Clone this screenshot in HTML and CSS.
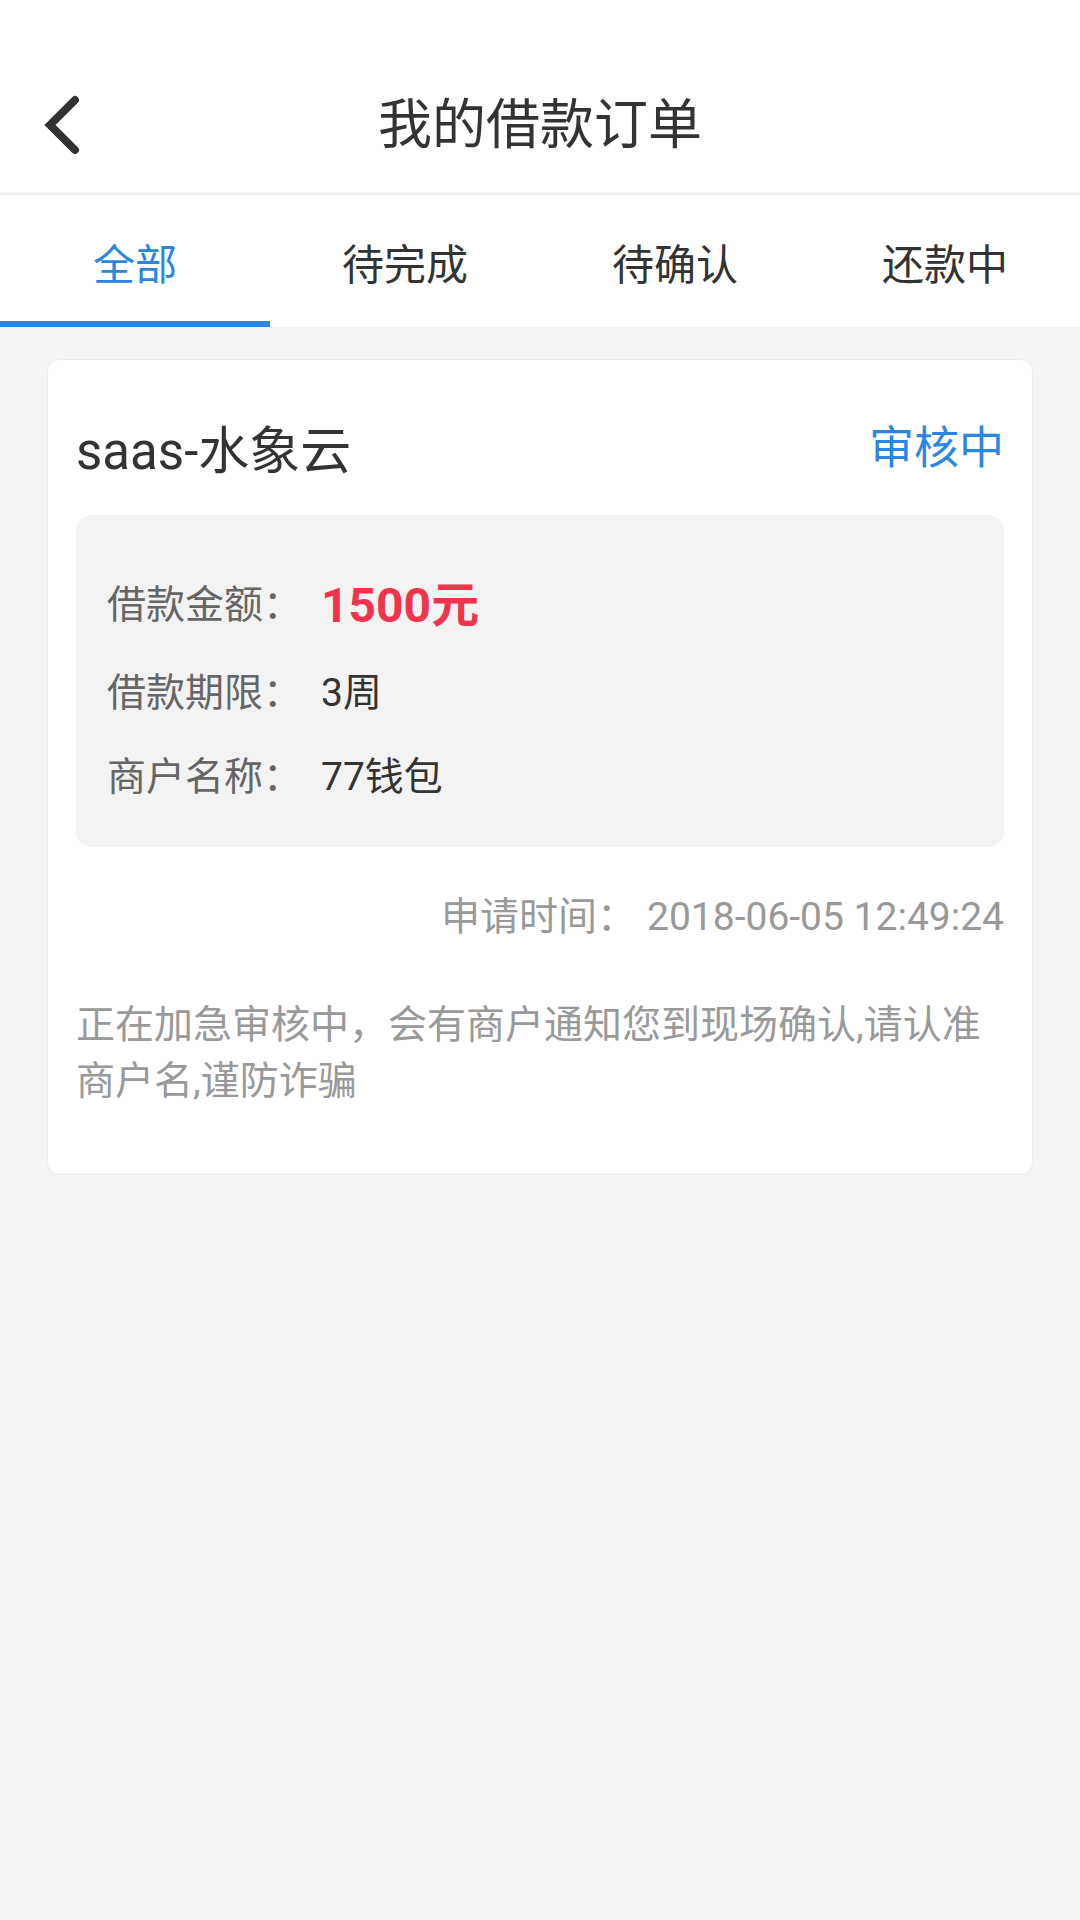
FILE: index.html
```html
<!DOCTYPE html>
<html lang="zh-CN">
<head>
<meta charset="utf-8">
<title>我的借款订单</title>
<link rel="stylesheet" href="styles.css">
</head>
<body>
<div class="app">
  <header class="header">
    <div class="toolbar">
      <div class="back">
        <svg width="46" height="64" viewBox="0 0 46 64" aria-hidden="true">
          <path d="M38 7 L13 32 L38 57" fill="none" stroke="#333333" stroke-width="8" stroke-linecap="round" stroke-linejoin="miter"/>
        </svg>
      </div>
      <h1 class="title">我的借款订单</h1>
      <div class="spacer"></div>
    </div>
  </header>

  <nav class="tabs">
    <div class="tab active"><span class="tab-label">全部</span><span class="tab-bar"></span></div>
    <div class="tab"><span class="tab-label">待完成</span><span class="tab-bar"></span></div>
    <div class="tab"><span class="tab-label">待确认</span><span class="tab-bar"></span></div>
    <div class="tab"><span class="tab-label">还款中</span><span class="tab-bar"></span></div>
  </nav>

  <main class="list">
    <section class="card">
      <div class="card-head">
        <span class="card-name">saas-水象云</span>
        <span class="card-status">审核中</span>
      </div>
      <div class="info">
        <div class="row row-amount">
          <span class="label">借款金额：</span>
          <span class="amount">1500元</span>
        </div>
        <div class="row">
          <span class="label">借款期限：</span>
          <span class="value">3周</span>
        </div>
        <div class="row">
          <span class="label">商户名称：</span>
          <span class="value">77钱包</span>
        </div>
      </div>
      <div class="time"><span class="time-label">申请时间：</span><span class="time-value">2018-06-05 12:49:24</span></div>
      <p class="note">正在加急审核中，会有商户通知您到现场确认,请认准商户名,谨防诈骗</p>
    </section>
  </main>
</div>
</body>
</html>
```

FILE: styles.css
```css
html, body {
  margin: 0;
  padding: 0;
}

body {
  width: 1080px;
  min-height: 1920px;
  background: #f4f4f4;
  font-family: Roboto, "Noto Sans CJK SC", "Noto Sans", sans-serif;
  color: #333333;
}

.app {
  display: flex;
  flex-direction: column;
}

.header {
  background: #ffffff;
  padding-top: 60px;
  border-bottom: 3px solid #f0f0f0;
}

.toolbar {
  height: 132px;
  display: grid;
  grid-template-columns: 1fr auto 1fr;
  align-items: center;
}

.back {
  display: flex;
  align-items: center;
  padding-left: 37px;
}

.back svg {
  display: block;
  margin-top: -2px;
}

.title {
  margin: 0;
  font-size: 54px;
  font-weight: 400;
  color: #333333;
  line-height: 132px;
}

.tabs {
  display: flex;
  background: #ffffff;
  height: 132px;
}

.tab {
  flex: 1;
  display: flex;
  flex-direction: column;
  padding-top: 6px;
}

.tab-label {
  flex: 1;
  display: flex;
  align-items: center;
  justify-content: center;
  font-size: 42px;
  color: #333333;
}

.tab-bar {
  height: 6px;
  background: transparent;
}

.tab.active .tab-label {
  color: #2a86e2;
}

.tab.active .tab-bar {
  background: #2a86e2;
}

.list {
  padding: 32px 47px;
}

.card {
  background: #ffffff;
  border: 1px solid #ebebeb;
  border-radius: 12px;
  padding: 62px 28px 65px 28px;
}

.card-head {
  display: flex;
  justify-content: space-between;
  align-items: center;
  height: 60px;
  margin-bottom: 33px;
}

.card-name {
  font-size: 51px;
  color: #333333;
  line-height: 60px;
}

.card-status {
  font-size: 45px;
  color: #2a86e2;
  line-height: 60px;
  margin-top: -6px;
}

.info {
  background: #f3f3f3;
  border-radius: 16px;
  padding: 54px 31px 46px 31px;
  display: flex;
  flex-direction: column;
  gap: 28px;
}

.row {
  display: flex;
  align-items: center;
  height: 56px;
}

.row-amount {
  height: 64px;
}

.label {
  width: 214px;
  flex-shrink: 0;
  font-size: 39px;
  color: #666666;
}

.value {
  font-size: 39px;
  color: #333333;
}

.amount {
  font-size: 48px;
  font-weight: 700;
  color: #f0344d;
}

.time {
  margin-top: 42px;
  display: flex;
  justify-content: flex-end;
  font-size: 39px;
  line-height: 56px;
  color: #999999;
}

.time-value {
  margin-left: 11px;
}

.note {
  margin: 52px 0 0 0;
  font-size: 39px;
  line-height: 56px;
  color: #999999;
}
```
